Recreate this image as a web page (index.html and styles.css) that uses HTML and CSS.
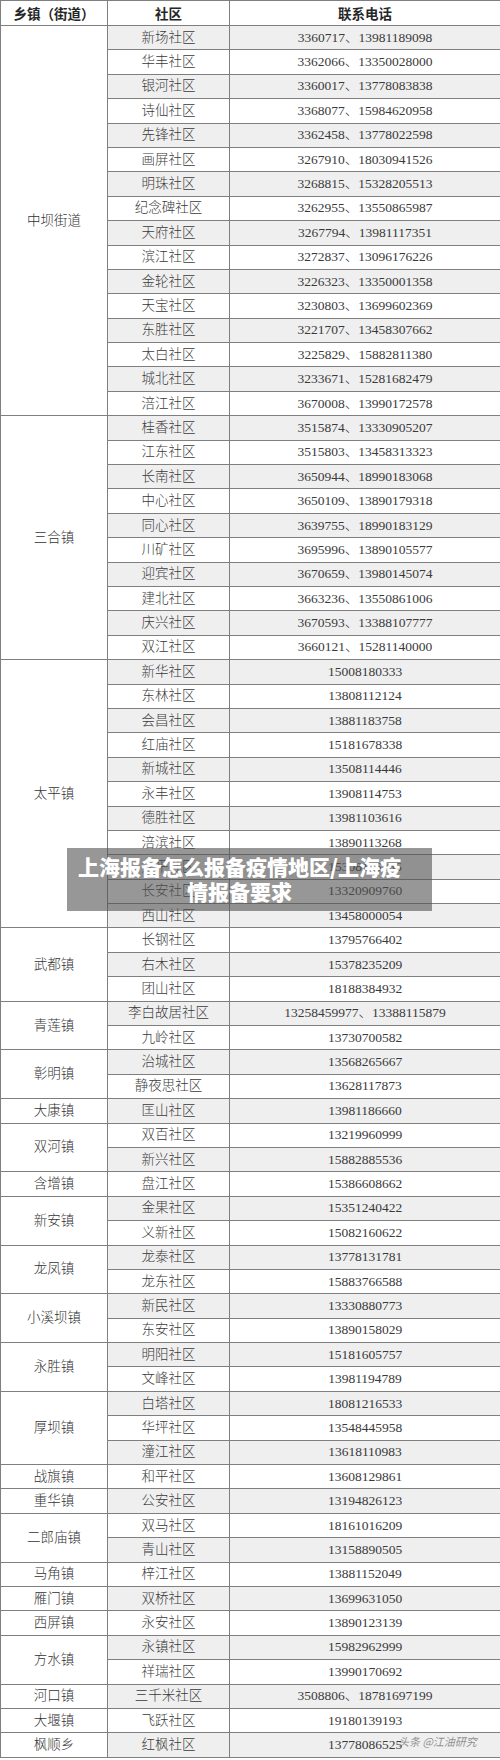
FILE: index.html
```html
<!DOCTYPE html>
<html lang="zh-CN">
<head>
<meta charset="utf-8">
<title>上海报备怎么报备疫情地区/上海疫情报备要求</title>
<link rel="stylesheet" href="styles.css">
</head>
<body>
<div class="page">
<table class="contacts">
<colgroup><col class="c1"><col class="c2"><col class="c3"></colgroup>
<thead>
<tr><th>乡镇（街道）</th><th>社区</th><th>联系电话</th></tr>
</thead>
<tbody>
<tr><td class="town" rowspan="16">中坝街道</td><td>新场社区</td><td>3360717、13981189098</td></tr>
<tr><td>华丰社区</td><td>3362066、13350028000</td></tr>
<tr><td>银河社区</td><td>3360017、13778083838</td></tr>
<tr><td>诗仙社区</td><td>3368077、15984620958</td></tr>
<tr><td>先锋社区</td><td>3362458、13778022598</td></tr>
<tr><td>画屏社区</td><td>3267910、18030941526</td></tr>
<tr><td>明珠社区</td><td>3268815、15328205513</td></tr>
<tr><td>纪念碑社区</td><td>3262955、13550865987</td></tr>
<tr><td>天府社区</td><td>3267794、13981117351</td></tr>
<tr><td>滨江社区</td><td>3272837、13096176226</td></tr>
<tr><td>金轮社区</td><td>3226323、13350001358</td></tr>
<tr><td>天宝社区</td><td>3230803、13699602369</td></tr>
<tr><td>东胜社区</td><td>3221707、13458307662</td></tr>
<tr><td>太白社区</td><td>3225829、15882811380</td></tr>
<tr><td>城北社区</td><td>3233671、15281682479</td></tr>
<tr><td>涪江社区</td><td>3670008、13990172578</td></tr>
<tr><td class="town" rowspan="10">三合镇</td><td>桂香社区</td><td>3515874、13330905207</td></tr>
<tr><td>江东社区</td><td>3515803、13458313323</td></tr>
<tr><td>长南社区</td><td>3650944、18990183068</td></tr>
<tr><td>中心社区</td><td>3650109、13890179318</td></tr>
<tr><td>同心社区</td><td>3639755、18990183129</td></tr>
<tr><td>川矿社区</td><td>3695996、13890105577</td></tr>
<tr><td>迎宾社区</td><td>3670659、13980145074</td></tr>
<tr><td>建北社区</td><td>3663236、13550861006</td></tr>
<tr><td>庆兴社区</td><td>3670593、13388107777</td></tr>
<tr><td>双江社区</td><td>3660121、15281140000</td></tr>
<tr><td class="town" rowspan="11">太平镇</td><td>新华社区</td><td>15008180333</td></tr>
<tr><td>东林社区</td><td>13808112124</td></tr>
<tr><td>会昌社区</td><td>13881183758</td></tr>
<tr><td>红庙社区</td><td>15181678338</td></tr>
<tr><td>新城社区</td><td>13508114446</td></tr>
<tr><td>永丰社区</td><td>13908114753</td></tr>
<tr><td>德胜社区</td><td>13981103616</td></tr>
<tr><td>涪滨社区</td><td>13890113268</td></tr>
<tr><td>太平社区</td><td>15308116266</td></tr>
<tr><td>长安社区</td><td>13320909760</td></tr>
<tr><td>西山社区</td><td>13458000054</td></tr>
<tr><td class="town" rowspan="3">武都镇</td><td>长钢社区</td><td>13795766402</td></tr>
<tr><td>右木社区</td><td>15378235209</td></tr>
<tr><td>团山社区</td><td>18188384932</td></tr>
<tr><td class="town" rowspan="2">青莲镇</td><td>李白故居社区</td><td>13258459977、13388115879</td></tr>
<tr><td>九岭社区</td><td>13730700582</td></tr>
<tr><td class="town" rowspan="2">彰明镇</td><td>治城社区</td><td>13568265667</td></tr>
<tr><td>静夜思社区</td><td>13628117873</td></tr>
<tr><td class="town">大康镇</td><td>匡山社区</td><td>13981186660</td></tr>
<tr><td class="town" rowspan="2">双河镇</td><td>双百社区</td><td>13219960999</td></tr>
<tr><td>新兴社区</td><td>15882885536</td></tr>
<tr><td class="town">含增镇</td><td>盘江社区</td><td>15386608662</td></tr>
<tr><td class="town" rowspan="2">新安镇</td><td>金果社区</td><td>15351240422</td></tr>
<tr><td>义新社区</td><td>15082160622</td></tr>
<tr><td class="town" rowspan="2">龙凤镇</td><td>龙泰社区</td><td>13778131781</td></tr>
<tr><td>龙东社区</td><td>15883766588</td></tr>
<tr><td class="town" rowspan="2">小溪坝镇</td><td>新民社区</td><td>13330880773</td></tr>
<tr><td>东安社区</td><td>13890158029</td></tr>
<tr><td class="town" rowspan="2">永胜镇</td><td>明阳社区</td><td>15181605757</td></tr>
<tr><td>文峰社区</td><td>13981194789</td></tr>
<tr><td class="town" rowspan="3">厚坝镇</td><td>白塔社区</td><td>18081216533</td></tr>
<tr><td>华坪社区</td><td>13548445958</td></tr>
<tr><td>潼江社区</td><td>13618110983</td></tr>
<tr><td class="town">战旗镇</td><td>和平社区</td><td>13608129861</td></tr>
<tr><td class="town">重华镇</td><td>公安社区</td><td>13194826123</td></tr>
<tr><td class="town" rowspan="2">二郎庙镇</td><td>双马社区</td><td>18161016209</td></tr>
<tr><td>青山社区</td><td>13158890505</td></tr>
<tr><td class="town">马角镇</td><td>梓江社区</td><td>13881152049</td></tr>
<tr><td class="town">雁门镇</td><td>双桥社区</td><td>13699631050</td></tr>
<tr><td class="town">西屏镇</td><td>永安社区</td><td>13890123139</td></tr>
<tr><td class="town" rowspan="2">方水镇</td><td>永镇社区</td><td>15982962999</td></tr>
<tr><td>祥瑞社区</td><td>13990170692</td></tr>
<tr><td class="town">河口镇</td><td>三千米社区</td><td>3508806、18781697199</td></tr>
<tr><td class="town">大堰镇</td><td>飞跃社区</td><td>19180139193</td></tr>
<tr><td class="town">枫顺乡</td><td>红枫社区</td><td>13778086525</td></tr>
</tbody>
</table>
<div class="caption">上海报备怎么报备疫情地区/上海疫<br>情报备要求</div>
<div class="watermark">头条 @江油研究</div>
</div>
</body>
</html>
```
FILE: styles.css
```css
html, body {
  margin: 0;
  padding: 0;
  background: #ffffff;
}

body {
  font-family: "Liberation Serif", "Noto Sans CJK SC", serif;
  color: #3a3a3a;
}

.page {
  position: relative;
  width: 500px;
}

.contacts {
  width: 500px;
  border-collapse: collapse;
  table-layout: fixed;
}

.c1 { width: 107px; }
.c2 { width: 122px; }
.c3 { width: 271px; }

.contacts th,
.contacts td {
  border: 1px solid #7f7f7f;
  padding: 0;
  text-align: center;
  vertical-align: middle;
  white-space: nowrap;
  overflow: hidden;
  font-size: 13.5px;
  line-height: 16px;
}

.contacts td {
  font-weight: 300;
}

.contacts thead th {
  height: 24px;
  font-family: "Noto Sans CJK SC", sans-serif;
  font-weight: 700;
  font-size: 13.5px;
  color: #262626;
}

.contacts tbody tr {
  height: 24.4px;
}

.contacts tbody tr:nth-child(odd) td:not(.town) {
  background: #efefef;
}

.contacts td.town {
  background: #ffffff;
  color: #333333;
}

.caption {
  position: absolute;
  left: 67px;
  top: 848px;
  width: 345px;
  height: 57px;
  padding: 6px 20px 0 0;
  background: rgba(82, 82, 82, 0.6);
  color: #ffffff;
  font-family: "Noto Sans CJK SC", sans-serif;
  font-weight: 900;
  font-size: 21px;
  line-height: 25px;
  text-align: center;
  white-space: nowrap;
}

.watermark {
  position: absolute;
  left: 398px;
  top: 1734px;
  font-family: "Noto Sans CJK SC", sans-serif;
  font-size: 11px;
  line-height: 14px;
  color: rgba(110, 110, 110, 0.75);
  font-style: italic;
}
```
